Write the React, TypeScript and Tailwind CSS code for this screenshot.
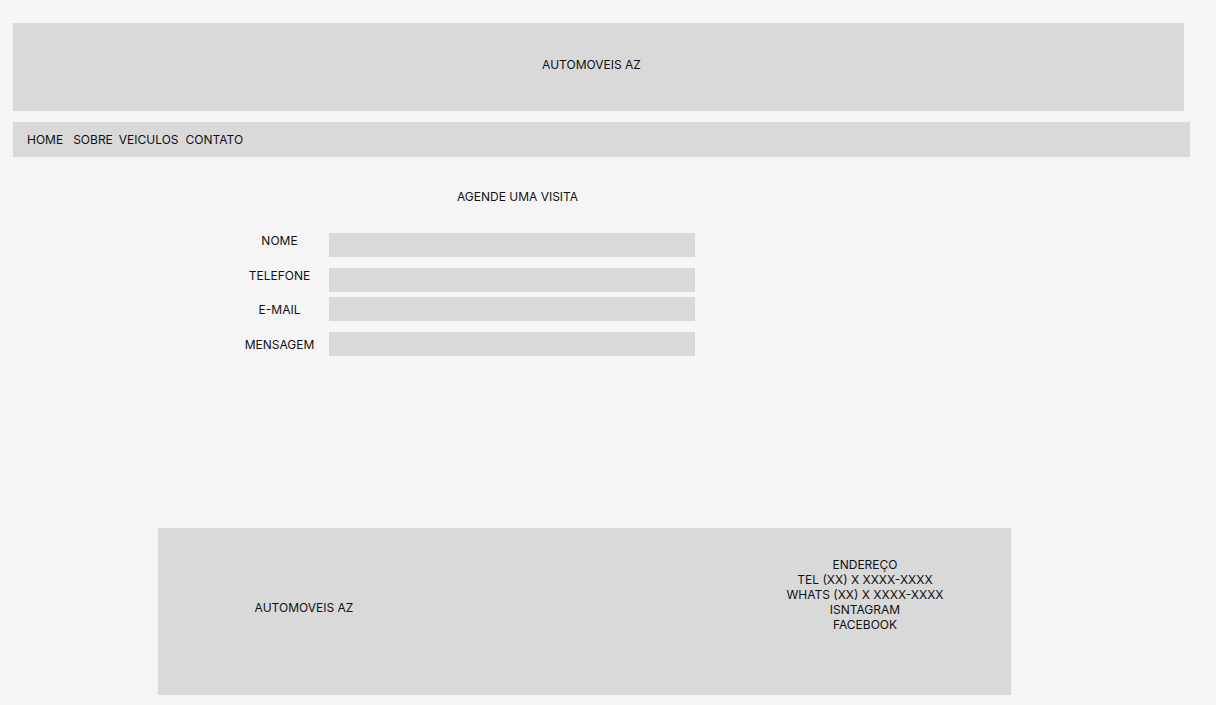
import React from 'react';

const fields = [
  { label: 'NOME', rowClass: 'mt-[29px]', labelClass: 'pt-0' },
  { label: 'TELEFONE', rowClass: 'mt-[11px]', labelClass: 'pt-0' },
  { label: 'E-MAIL', rowClass: 'mt-[5px]', labelClass: 'pt-[5px]' },
  { label: 'MENSAGEM', rowClass: 'mt-[11px]', labelClass: 'pt-[5px]' },
];

const contacts = [
  'ENDEREÇO',
  'TEL (XX) X XXXX-XXXX',
  'WHATS (XX) X XXXX-XXXX',
  'ISNTAGRAM',
  'FACEBOOK',
];

export default function App() {
  return (
    <div
      className="min-h-[705px] w-[1216px] bg-[#f5f5f5] pt-[23px] text-[12px] leading-[15px] text-[#111]"
      style={{ fontFamily: 'Inter, "Noto Sans", sans-serif' }}
    >
      {/* header */}
      <header className="ml-[13px] flex h-[88px] w-[1171px] items-center justify-center bg-[#d9d9d9] pb-[6px] pr-[14px]">
        AUTOMOVEIS AZ
      </header>

      {/* nav */}
      <nav className="ml-[13px] mt-[11px] flex h-[35px] w-[1177px] items-center bg-[#d9d9d9] pl-[14px]">
        <a href="#" className="mr-[10px]">HOME</a>
        <a href="#" className="mr-[6px]">SOBRE</a>
        <a href="#" className="mr-[7px]">VEICULOS</a>
        <a href="#">CONTATO</a>
      </nav>

      {/* form */}
      <section className="ml-[230px] mt-[32px] w-[575px]">
        <h2 className="text-center">AGENDE UMA VISITA</h2>
        {fields.map((f) => (
          <div key={f.label} className={`flex ${f.rowClass}`}>
            <label className={`w-[99px] text-center ${f.labelClass}`}>{f.label}</label>
            <input className="h-[24px] w-[366px] bg-[#d9d9d9] outline-none" />
          </div>
        ))}
      </section>

      {/* footer */}
      <footer className="ml-[158px] mt-[172px] flex h-[167px] w-[853px] bg-[#d9d9d9]">
        <div className="w-[292px] shrink-0 pt-[72px] text-center">AUTOMOVEIS AZ</div>
        <div className="ml-[285px] w-[260px] shrink-0 pt-[29px] text-center">
          {contacts.map((c) => (
            <div key={c}>{c}</div>
          ))}
        </div>
      </footer>
    </div>
  );
}
